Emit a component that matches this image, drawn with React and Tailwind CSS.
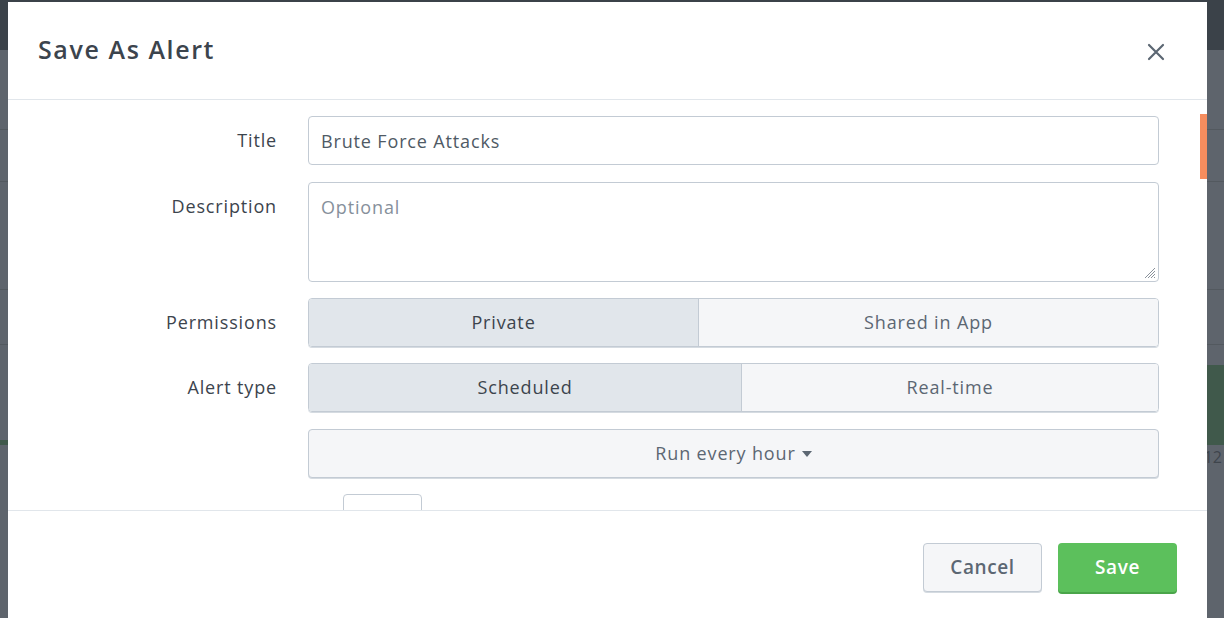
import { useState } from "react";

const Row = ({ label, className = "", children }) => (
  <div className={`flex items-start ${className}`}>
    <label className="w-[269px] shrink-0 pt-[12px] text-right text-[18px] leading-[24px] tracking-[0.85px] text-[#3c444d]">
      {label}
    </label>
    <div className="ml-[31px] w-[851px]">{children}</div>
  </div>
);

const Toggle = ({ options, split, value, onChange }) => (
  <div className="flex h-[49px] overflow-hidden rounded-[4px] border border-[#c3cbd4] shadow-[0_1px_0_#d5dbe1]">
    {options.map((opt, i) => (
      <button
        key={opt}
        onClick={() => onChange(opt)}
        className={`${i === 0 ? split : "flex-1"} ${i > 0 ? "border-l border-[#c3cbd4]" : ""} ${
          value === opt ? "bg-[#e1e6eb] text-[#3c444d]" : "bg-[#f5f6f8] text-[#5c6773]"
        } text-[18px] tracking-[0.85px]`}
      >
        {opt}
      </button>
    ))}
  </div>
);

const App = () => {
  const [title, setTitle] = useState("Brute Force Attacks");
  const [permission, setPermission] = useState("Private");
  const [alertType, setAlertType] = useState("Scheduled");

  return (
    <div className="relative h-[618px] w-full overflow-hidden bg-[#5e646c] font-['Open_Sans',sans-serif]">
      {/* page behind the dimmed backdrop */}
      <div className="flex flex-col">
        <div className="h-[50px] bg-[#3b4249]"></div>
        <div className="h-[80px] border-b border-[#53595f]"></div>
        <div className="h-[52px] border-b border-[#53595f]"></div>
        <div className="h-[108px] border-b border-[#53595f]"></div>
        <div className="h-[55px] border-b border-[#53595f]"></div>
        <div className="h-[20px]"></div>
        <div className="flex h-[80px]">
          <div className="w-[8px] border-b-[5px] border-[#40594b]"></div>
          <div className="flex-1 bg-[#40594b]"></div>
        </div>
        <div className="flex justify-end pr-[2px] text-[16px] text-[#3f454c]">12</div>
      </div>

      {/* modal */}
      <div className="absolute left-[8px] top-[2px] flex h-[660px] w-[1199px] flex-col bg-white">
        <div className="flex h-[98px] shrink-0 items-center justify-between border-b border-[#e1e6eb] pl-[30px] pr-[42px]">
          <h2 className="pb-[2px] text-[25px] font-semibold tracking-[1.6px] text-[#3c444d]">Save As Alert</h2>
          <button className="mt-[2px] text-[#5c6773]">
            <svg width="18" height="18" viewBox="0 0 18 18" fill="none" stroke="currentColor" strokeWidth="2.2" strokeLinecap="round">
              <path d="M2 2L16 16M16 2L2 16" />
            </svg>
          </button>
        </div>

        <div className="relative h-[411px] shrink-0 overflow-hidden border-b border-[#e1e6eb]">
          <div className="flex flex-col gap-[16px] pt-[16px]">
            <Row label="Title">
              <input
                value={title}
                onChange={(e) => setTitle(e.target.value)}
                className="h-[49px] w-full rounded-[4px] border border-[#c3cbd4] px-[12px] text-[18px] tracking-[0.85px] text-[#4f5a65] outline-none"
              />
            </Row>
            <Row label="Description" className="mt-[1px]">
              <div className="relative">
                <textarea
                  placeholder="Optional"
                  className="block h-[100px] w-full resize-none rounded-[4px] border border-[#c3cbd4] px-[12px] pt-[12px] text-[18px] leading-[24px] tracking-[0.85px] text-[#4f5a65] outline-none placeholder:text-[#86909b]"
                />
                <svg width="12" height="12" viewBox="0 0 12 12" className="absolute bottom-[3px] right-[3px]" stroke="#8a929b" strokeWidth="1">
                  <path d="M11 1L1 11M11 4L4 11M11 7L7 11M11 10L10 11" />
                </svg>
              </div>
            </Row>
            <Row label="Permissions">
              <Toggle options={["Private", "Shared in App"]} split="w-[389px]" value={permission} onChange={setPermission} />
            </Row>
            <Row label="Alert type">
              <Toggle options={["Scheduled", "Real-time"]} split="w-[432px]" value={alertType} onChange={setAlertType} />
            </Row>
            <Row label="">
              <button className="mt-[1px] flex h-[49px] w-full items-center justify-center gap-[6px] rounded-[4px] border border-[#c3cbd4] bg-[#f5f6f8] text-[18px] tracking-[0.85px] text-[#5c6773] shadow-[0_1px_0_#d5dbe1]">
                Run every hour
                <svg width="10" height="6" viewBox="0 0 10 6" fill="currentColor" className="mt-[1px]">
                  <path d="M0 0H10L5 6Z" />
                </svg>
              </button>
            </Row>
            <Row label="">
              <div className="ml-[35px] h-[40px] w-[79px] rounded-[4px] border border-[#c3cbd4] bg-white"></div>
            </Row>
          </div>
          {/* scrollbar thumb */}
          <div className="absolute right-0 top-[14px] h-[65px] w-[7px] bg-[#f68d5e]"></div>
        </div>

        <div className="flex justify-end gap-[16px] pr-[30px] pt-[32px]">
          <button className="h-[49px] w-[119px] rounded-[4px] border border-[#c3cbd4] bg-[#f5f6f8] text-[19px] font-semibold tracking-[0.6px] text-[#5c6773] shadow-[0_1px_0_#d5dbe1]">
            Cancel
          </button>
          <button className="h-[49px] w-[119px] rounded-[4px] bg-[#5cc05c] text-[19px] font-semibold tracking-[0.6px] text-white shadow-[0_2px_0_#4aa54a]">
            Save
          </button>
        </div>
      </div>
    </div>
  );
};

export default App;
